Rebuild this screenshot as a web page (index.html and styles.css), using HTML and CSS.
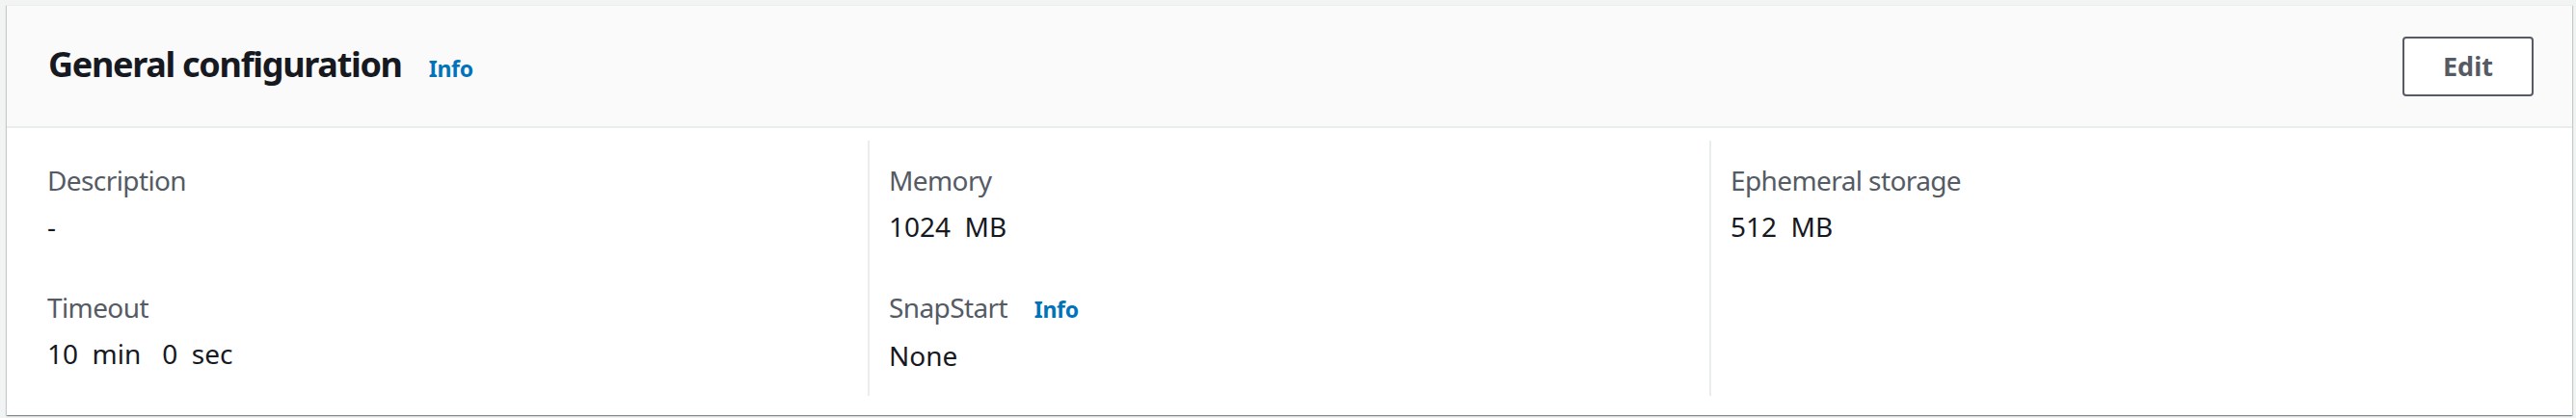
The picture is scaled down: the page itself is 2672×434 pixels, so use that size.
FILE: index.html
```html
<!DOCTYPE html>
<html lang="en">
<head>
<meta charset="utf-8">
<title>General configuration</title>
<link rel="stylesheet" href="styles.css">
</head>
<body>
<section class="card">
  <header class="card-header">
    <div class="title-wrap">
      <h2 class="title">General configuration</h2>
      <a class="info" href="#">Info</a>
    </div>
    <button class="btn" type="button">Edit</button>
  </header>
  <div class="card-body">
    <div class="col">
      <div class="pair">
        <div class="label">Description</div>
        <div class="value">-</div>
      </div>
      <div class="pair">
        <div class="label">Timeout</div>
        <div class="value pre">10  min   0  sec</div>
      </div>
    </div>
    <div class="col">
      <div class="pair">
        <div class="label">Memory</div>
        <div class="value pre">1024  MB</div>
      </div>
      <div class="pair">
        <div class="label">SnapStart <a class="info small" href="#">Info</a></div>
        <div class="value">None</div>
      </div>
    </div>
    <div class="col">
      <div class="pair">
        <div class="label">Ephemeral storage</div>
        <div class="value pre">512  MB</div>
      </div>
    </div>
  </div>
</section>
</body>
</html>
```
FILE: styles.css
```css
html, body {
  margin: 0;
  padding: 0;
}
body {
  background: #f2f3f3;
  padding: 5px 4px 4px 7px;
  font-family: "Noto Sans", "Open Sans", sans-serif;
  color: #16191f;
}
.card {
  background: #ffffff;
  box-shadow: 0 1px 1px 0 rgba(0, 28, 36, 0.3), 1px 1px 1px 0 rgba(0, 28, 36, 0.15), -1px 1px 1px 0 rgba(0, 28, 36, 0.15);
  border-top: 1px solid #eaeded;
}
.card-header {
  background: #fafafa;
  border-bottom: 2px solid #eaeded;
  height: 125px;
  box-sizing: content-box;
  display: flex;
  align-items: center;
  justify-content: space-between;
  padding: 0 40px 0 43px;
}
.title-wrap {
  display: flex;
  align-items: baseline;
  margin-top: -3px;
}
.title {
  margin: 0;
  font-size: 36px;
  line-height: 44px;
  font-weight: 700;
  letter-spacing: -1.3px;
  color: #16191f;
}
.info {
  color: #0073bb;
  font-weight: 700;
  font-size: 23px;
  letter-spacing: -0.3px;
  text-decoration: none;
  margin-left: 28px;
}
.info.small {
  margin-left: 21px;
}
.btn {
  width: 136px;
  height: 62px;
  border: 2px solid #545b64;
  border-radius: 4px;
  background: #ffffff;
  color: #545b64;
  font-family: inherit;
  font-weight: 700;
  font-size: 27px;
  padding: 0;
}
.card-body {
  display: grid;
  grid-template-columns: 1fr 1fr 1fr;
  padding: 13px 22px 20px 20px;
}
.col {
  border-left: 2px solid #eaeded;
  padding: 19px 0 20px 20px;
  display: flex;
  flex-direction: column;
  gap: 40px;
}
.col:first-child {
  border-left-color: transparent;
}
.label {
  font-size: 28px;
  line-height: 44px;
  color: #545b64;
  letter-spacing: -0.6px;
  margin-bottom: 4px;
}
.value {
  font-size: 28px;
  line-height: 44px;
  color: #16191f;
}
.pre {
  white-space: pre;
}
```
